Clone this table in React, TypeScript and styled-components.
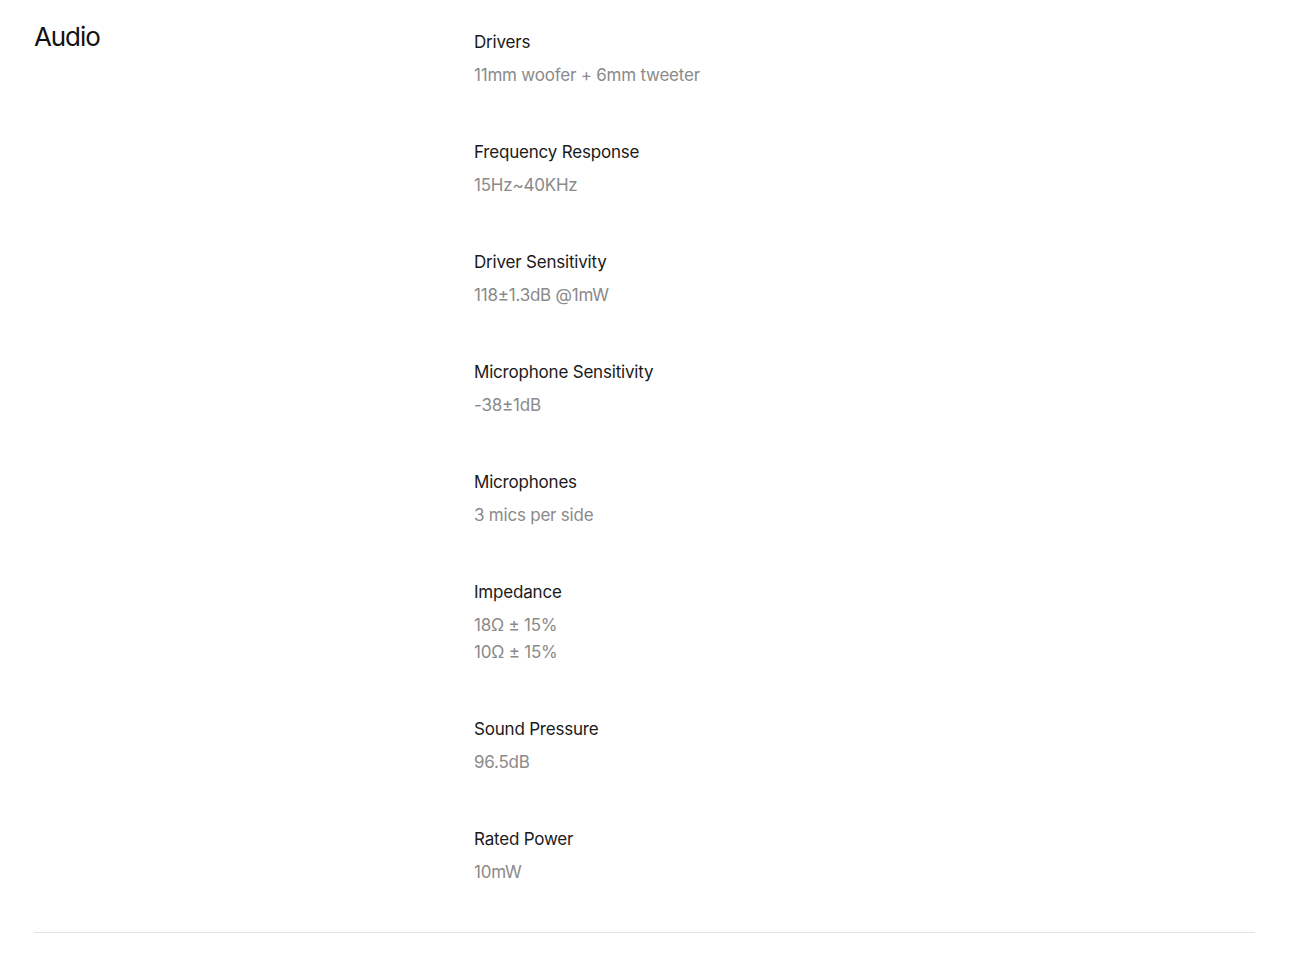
import React from "react";
import styled, { createGlobalStyle } from "styled-components";

const GlobalStyle = createGlobalStyle`
	body {
		margin: 0;
		background: #fff;
		font-family: Inter, "Noto Sans", sans-serif;
		-webkit-font-smoothing: antialiased;
	}
`;

interface SpecItem {
	label: string;
	values: string[];
}

const specs: SpecItem[] = [
	{ label: "Drivers", values: ["11mm woofer + 6mm tweeter"] },
	{ label: "Frequency Response", values: ["15Hz~40KHz"] },
	{ label: "Driver Sensitivity", values: ["118±1.3dB @1mW"] },
	{ label: "Microphone Sensitivity", values: ["-38±1dB"] },
	{ label: "Microphones", values: ["3 mics per side"] },
	{ label: "Impedance", values: ["18Ω ± 15%", "10Ω ± 15%"] },
	{ label: "Sound Pressure", values: ["96.5dB"] },
	{ label: "Rated Power", values: ["10mW"] }
];

const Section = styled.section`
	margin: 0 61px 0 34px;
	padding-top: 23px;
	padding-bottom: 46px;
	border-bottom: 1px solid #e3e3e3;
	display: grid;
	grid-template-columns: 440px 1fr;
`;

const Title = styled.h2`
	margin: 0;
	font-size: 26px;
	line-height: 28px;
	font-weight: 400;
	letter-spacing: -1.1px;
	color: #111;
`;

const SpecList = styled.dl`
	margin: 0;
	padding-top: 6px;
	display: flex;
	flex-direction: column;
	gap: 50px;
`;

const SpecRow = styled.div`
	display: flex;
	flex-direction: column;
`;

const SpecLabel = styled.dt`
	font-size: 17px;
	line-height: 27px;
	letter-spacing: -0.2px;
	color: #1a1a1a;
	margin-bottom: 6px;
`;

const SpecValue = styled.dd`
	margin: 0;
	font-size: 17px;
	line-height: 27px;
	letter-spacing: -0.22px;
	color: #8a8a8a;
`;

export default function App(): JSX.Element {
	return (
		<>
			<GlobalStyle />
			<Section>
				<Title>Audio</Title>
				<SpecList>
					{specs.map((s) => (
						<SpecRow key={s.label}>
							<SpecLabel>{s.label}</SpecLabel>
							{s.values.map((v) => (
								<SpecValue key={v}>{v}</SpecValue>
							))}
						</SpecRow>
					))}
				</SpecList>
			</Section>
		</>
	);
}
